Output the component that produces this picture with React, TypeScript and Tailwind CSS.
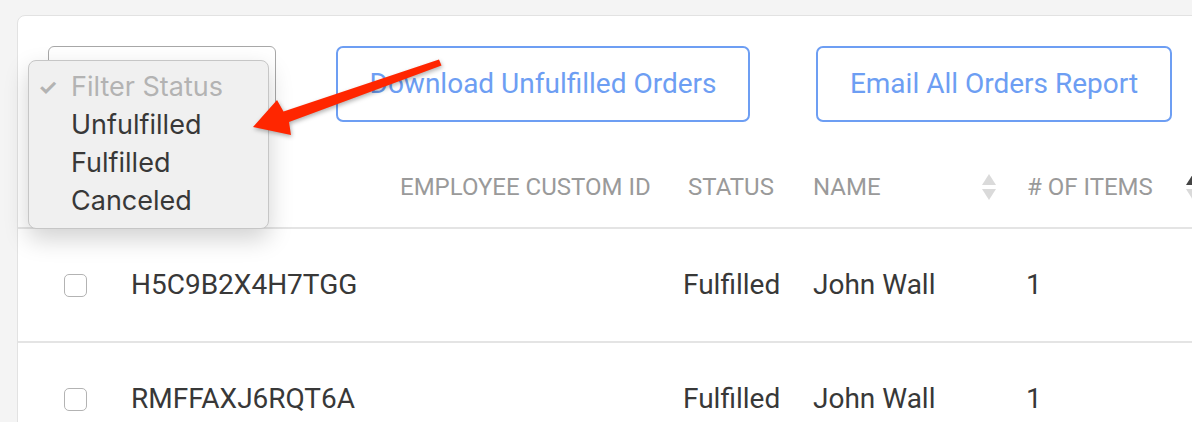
import React from 'react';

interface OrderRow {
  id: string;
  status: string;
  name: string;
  items: number;
}

const rows: OrderRow[] = [
  { id: 'H5C9B2X4H7TGG', status: 'Fulfilled', name: 'John Wall', items: 1 },
  { id: 'RMFFAXJ6RQT6A', status: 'Fulfilled', name: 'John Wall', items: 1 },
];

const cols = 'grid grid-cols-[97px_269px_288px_125px_214px_1fr]';

const SortIcon = ({ active }: { active?: boolean }) => (
  <svg width="16" height="28" viewBox="0 0 16 28" className="shrink-0">
    <path d="M8 1 L15 12 L1 12 Z" fill={active ? '#444444' : '#dadada'} />
    <path d="M8 27 L15 16 L1 16 Z" fill="#dadada" />
  </svg>
);

const StatusMenu = () => (
  <div className="absolute left-[28px] top-[60px] w-[241px] h-[169px] rounded-[8px] border border-[#c6c6c6] bg-[#f0f0f0] shadow-[0_10px_24px_rgba(0,0,0,0.18)] pt-[7px] font-['Inter',sans-serif] text-[27px] leading-[38px] text-[#383838]">
    <div className="flex items-center text-[#b3b3b3]">
      <span className="w-[42px] pl-[9px] text-[22px] font-bold">✓</span>
      <span>Filter Status</span>
    </div>
    <div className="pl-[42px]">Unfulfilled</div>
    <div className="pl-[42px]">Fulfilled</div>
    <div className="pl-[42px]">Canceled</div>
  </div>
);

const Arrow = () => (
  <svg
    className="absolute left-0 top-0 pointer-events-none drop-shadow-[1px_2px_2px_rgba(0,0,0,0.3)]"
    width="460"
    height="150"
    viewBox="0 0 460 150"
  >
    <polygon
      points="439,59.5 441.5,65.5 289,122 291,135 253,127 277,100 283.5,111.5"
      fill="#ff2600"
    />
  </svg>
);

export default function App() {
  return (
    <div className="relative h-[422px] w-[1192px] overflow-hidden bg-[#f4f4f4] pl-[17px] pt-[15px] font-['Roboto',sans-serif]">
      <div className="w-[1210px] rounded-tl-[8px] border border-[#e2e2e2] bg-white">
        <div className="flex items-start pl-[30px] pt-[30px]">
          <div className="h-[76px] w-[228px] rounded-[6px] border border-[#a8a8a8] bg-white" />
          <button className="ml-[60px] flex h-[76px] w-[414px] items-center justify-center rounded-[7px] border-2 border-[#6d9ef3] text-[28px] text-[#6d9ef3]">
            Download Unfulfilled Orders
          </button>
          <button className="ml-[66px] flex h-[76px] w-[356px] items-center justify-center rounded-[7px] border-2 border-[#6d9ef3] text-[28px] text-[#6d9ef3]">
            Email All Orders Report
          </button>
        </div>

        <div className={`${cols} mt-[24px] h-[81px] items-center text-[24px] uppercase text-[#9a9a9a]`}>
          <div />
          <div />
          <div className="pl-[16px]">Employee Custom ID</div>
          <div className="pl-[16px]">Status</div>
          <div className="flex items-center justify-between pl-[16px] pr-[14px]">
            <span>Name</span>
            <SortIcon />
          </div>
          <div className="flex items-center pl-[16px]">
            <span># of Items</span>
            <span className="ml-[32px]">
              <SortIcon active />
            </span>
          </div>
        </div>

        {rows.map((row) => (
          <div
            key={row.id}
            className={`${cols} h-[114px] items-center border-t-2 border-[#e4e4e4] text-[28px] text-[#383838]`}
          >
            <div className="pl-[46px]">
              <div className="h-[23px] w-[23px] rounded-[5px] border border-[#b3b3b3] bg-white" />
            </div>
            <div className="pl-[16px]">{row.id}</div>
            <div />
            <div className="pl-[11px]">{row.status}</div>
            <div className="pl-[16px]">{row.name}</div>
            <div className="pl-[15px]">{row.items}</div>
          </div>
        ))}
      </div>

      <StatusMenu />
      <Arrow />
    </div>
  );
}
